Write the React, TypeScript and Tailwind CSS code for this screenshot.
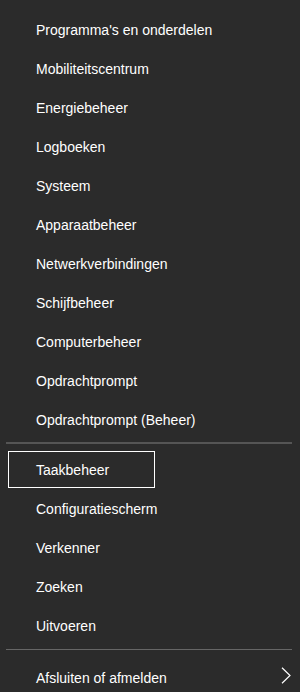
const topItems = [
  "Programma's en onderdelen",
  "Mobiliteitscentrum",
  "Energiebeheer",
  "Logboeken",
  "Systeem",
  "Apparaatbeheer",
  "Netwerkverbindingen",
  "Schijfbeheer",
  "Computerbeheer",
  "Opdrachtprompt",
  "Opdrachtprompt (Beheer)",
];

const middleItems = ["Configuratiescherm", "Verkenner", "Zoeken", "Uitvoeren"];

const MenuRow = ({ label }: { label: string }) => (
  <div className="h-[39px] flex items-center pl-[36px] text-white text-[14px] whitespace-nowrap">
    {label}
  </div>
);

const App = () => {
  return (
    <div
      className="w-[300px] h-[692px] overflow-hidden bg-[#2b2b2b] pt-[11px]"
      style={{ fontFamily: '"Liberation Sans", Arial, sans-serif' }}
    >
      {topItems.map((item) => (
        <MenuRow key={item} label={item} />
      ))}

      <div className="mt-[2px] mb-[7px] ml-[6px] mr-[8px] h-[2px] bg-[#555555]" />

      <div className="h-[39px] flex items-start px-2">
        <div className="w-[147px] h-[37px] border border-white flex items-center pl-[27px] pt-[2px] text-white text-[14px]">
          Taakbeheer
        </div>
      </div>

      {middleItems.map((item) => (
        <MenuRow key={item} label={item} />
      ))}

      <div className="mt-[3px] mb-[9px] ml-[6px] mr-[8px] h-px bg-[#666666]" />

      <div className="h-[39px] flex items-start justify-between pl-[36px] pr-[9px]">
        <span className="h-[39px] flex items-center text-white text-[14px]">
          Afsluiten of afmelden
        </span>
        <svg
          width="10"
          height="17"
          viewBox="0 0 10 17"
          className="mt-[8px]"
          fill="none"
          stroke="white"
          strokeWidth="1.2"
        >
          <polyline points="1,0.8 9,8.5 1,16.2" />
        </svg>
      </div>
    </div>
  );
};

export default App;
